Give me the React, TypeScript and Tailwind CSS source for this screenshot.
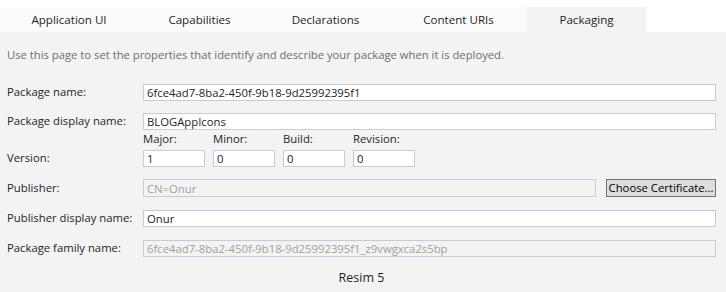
import React from "react";

const TABS = [
  { label: "Application UI", w: "w-[138px]" },
  { label: "Capabilities", w: "w-[123px]" },
  { label: "Declarations", w: "w-[129px]" },
  { label: "Content URIs", w: "w-[137px]" },
  { label: "Packaging", w: "w-[119px]", active: true },
];

const inputBase =
  "h-[17px] border border-[#c9c9d9] px-[3px] text-[11.3px] leading-[15px] outline-none";

function Row({ label, children, className = "" }: { label: string; children: React.ReactNode; className?: string }) {
  return (
    <div className={`flex items-center ${className}`}>
      <div className="w-[136px] shrink-0 text-[11.3px] text-[#1e1e1e]">{label}</div>
      <div className="flex flex-1 items-center gap-[10px]">{children}</div>
    </div>
  );
}

export default function App() {
  return (
    <div
      className="w-[726px] h-[292px] bg-[#f3f3f3] text-[#1e1e1e] overflow-hidden"
      style={{ fontFamily: '"Open Sans", "Noto Sans", sans-serif' }}
    >
      {/* Tab strip */}
      <div className="h-[32px] bg-white flex items-end">
        {TABS.map((t) => (
          <div
            key={t.label}
            className={`${t.w} h-[25px] flex items-center justify-center text-[11.6px] ${
              t.active ? "bg-[#f3f3f3]" : "bg-[#fbfbfb]"
            }`}
          >
            {t.label}
          </div>
        ))}
      </div>

      <div className="pl-[7px] pr-[10px]">
        <p className="mt-[15px] h-[16px] leading-[16px] text-[11.25px] text-[#6d6d6d]">
          Use this page to set the properties that identify and describe your package when it is deployed.
        </p>

        <Row label="Package name:" className="mt-[21px]">
          <input readOnly value="6fce4ad7-8ba2-450f-9b18-9d25992395f1" className={`${inputBase} flex-1 bg-white text-[#1e1e1e]`} />
        </Row>

        <Row label="Package display name:" className="mt-[12px]">
          <input readOnly value="BLOGAppIcons" className={`${inputBase} flex-1 bg-white text-[#1e1e1e]`} />
        </Row>

        {/* Version */}
        <div className="flex items-end mt-[2px]">
          <div className="w-[136px] shrink-0 h-[17px] flex items-center text-[11.3px]">Version:</div>
          <div className="flex gap-[8px]">
            {[
              ["Major:", "1"],
              ["Minor:", "0"],
              ["Build:", "0"],
              ["Revision:", "0"],
            ].map(([l, v]) => (
              <div key={l} className="flex flex-col w-[62px]">
                <span className="h-[14px] leading-[14px] text-[11.3px]">{l}</span>
                <input readOnly value={v} className={`${inputBase} mt-[4px] w-[62px] bg-white`} />
              </div>
            ))}
          </div>
        </div>

        <Row label="Publisher:" className="mt-[12px]">
          <input readOnly value="CN=Onur" className={`${inputBase} h-[18px] flex-1 bg-[#f3f3f3] text-[#a0a0a0]`} />
          <button className="h-[18px] w-[110px] shrink-0 whitespace-nowrap border border-[#707070] bg-[#dddddd] text-[11.3px] leading-[14px] text-black">
            Choose Certificate...
          </button>
        </Row>

        <Row label="Publisher display name:" className="mt-[13px]">
          <input readOnly value="Onur" className={`${inputBase} flex-1 bg-white text-[#1e1e1e]`} />
        </Row>

        <Row label="Package family name:" className="mt-[13px]">
          <input
            readOnly
            value="6fce4ad7-8ba2-450f-9b18-9d25992395f1_z9vwgxca2s5bp"
            className={`${inputBase} flex-1 bg-[#f3f3f3] text-[#a0a0a0]`}
          />
        </Row>

        <div className="mt-[12px] text-center text-[12.5px] text-[#1e1e1e]">Resim 5</div>
      </div>
    </div>
  );
}
